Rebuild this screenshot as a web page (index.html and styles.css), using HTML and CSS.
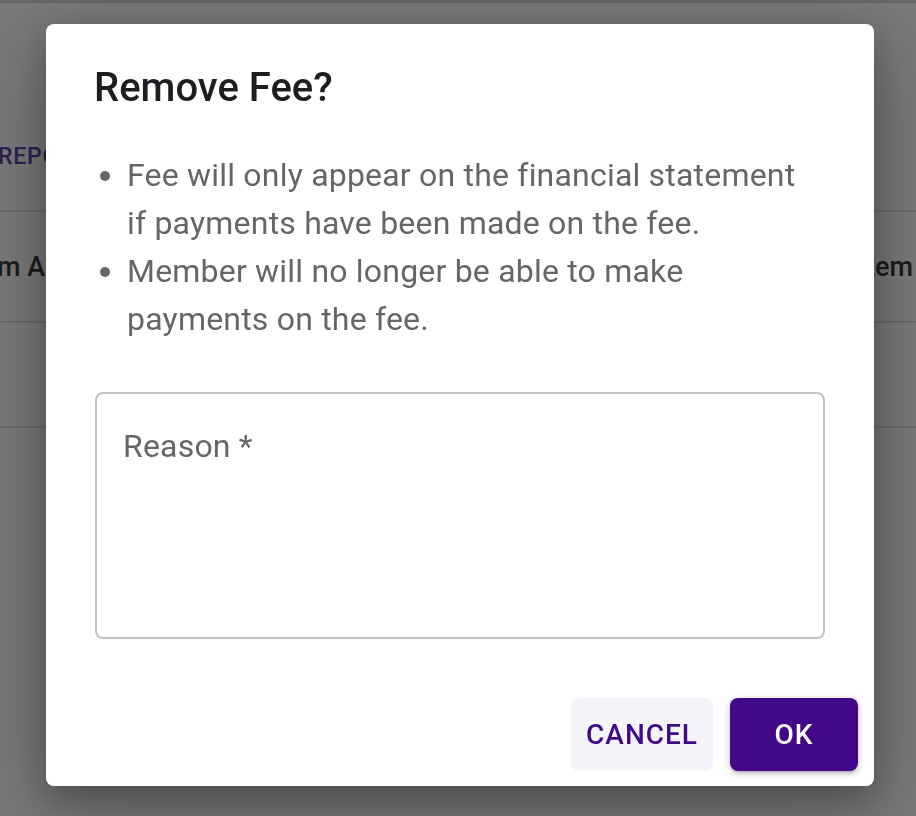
FILE: index.html
```html
<!DOCTYPE html>
<html lang="en">
<head>
<meta charset="utf-8">
<title>Remove Fee?</title>
<link rel="stylesheet" href="styles.css">
</head>
<body>
<div class="page">
  <div class="topbar"></div>
  <div class="tabs"><span class="tab">REPORTS</span></div>
  <div class="row head">
    <span class="cell left">Item Amount</span>
    <span class="cell right">Item</span>
  </div>
  <div class="row empty"></div>
</div>

<div class="overlay">
  <div class="dialog" role="dialog" aria-labelledby="dlg-title">
    <h2 class="dialog-title" id="dlg-title">Remove Fee?</h2>
    <div class="dialog-content">
      <ul class="notes">
        <li>Fee will only appear on the financial statement if payments have been made on the fee.</li>
        <li>Member will no longer be able to make payments on the fee.</li>
      </ul>
      <div class="field">
        <span class="field-label">Reason *</span>
      </div>
    </div>
    <div class="dialog-actions">
      <button class="btn btn-text" type="button">CANCEL</button>
      <button class="btn btn-primary" type="button">OK</button>
    </div>
  </div>
</div>
</body>
</html>
```

FILE: styles.css
```css
* { box-sizing: border-box; }

html, body {
  margin: 0;
  padding: 0;
  height: 100%;
}

body {
  background: #7a7a7a;
  font-family: Roboto, "Liberation Sans", Arial, sans-serif;
  overflow: hidden;
}

.page {
  display: flex;
  flex-direction: column;
  width: 100%;
}

.topbar {
  height: 3px;
  background: #676767;
}

.tabs {
  height: 209px;
  display: flex;
  padding-top: 134px;
  border-bottom: 2px solid #6b6b6b;
}

.tab {
  margin-left: -2px;
  font-size: 23px;
  font-weight: 500;
  letter-spacing: 0.8px;
  color: #2e2150;
  line-height: 40px;
  height: 40px;
}

.row {
  display: flex;
  justify-content: space-between;
  align-items: center;
  border-bottom: 2px solid #6b6b6b;
}

.row.head {
  height: 111px;
}

.row.empty {
  height: 105px;
}

.cell {
  font-size: 27px;
  font-weight: 500;
  color: #1c1c1c;
  white-space: nowrap;
}

.cell.left {
  margin-left: -34px;
}

.cell.right {
  margin-right: 3px;
}

/* dialog overlay */
.overlay {
  position: fixed;
  inset: 0;
  display: flex;
  align-items: flex-start;
  padding: 24px 0 0 46px;
}

.dialog {
  width: 828px;
  height: 762px;
  background: #fff;
  border-radius: 8px;
  display: flex;
  flex-direction: column;
  box-shadow: 0 22px 70px 6px rgba(0, 0, 0, 0.28), 0 10px 30px rgba(0, 0, 0, 0.18);
}

.dialog-title {
  margin: 0;
  padding: 32px 48px 0;
  font-size: 40px;
  line-height: 64px;
  font-weight: 500;
  letter-spacing: 0;
  color: #1f1d22;
}

.dialog-content {
  padding: 31px 48px 0 49px;
  display: flex;
  flex-direction: column;
}

.notes {
  margin: 0;
  padding: 0 0 0 32px;
  width: 715px;
  color: #666;
  font-size: 32px;
  line-height: 48px;
  letter-spacing: 0.2px;
}

.notes li::marker {
  color: #666;
}

.field {
  margin-top: 49px;
  width: 730px;
  height: 247px;
  border: 2px solid #c4c4c4;
  border-radius: 8px;
  padding: 29px 26px 0;
}

.field-label {
  display: block;
  font-size: 32px;
  line-height: 46px;
  color: #666;
  letter-spacing: 0.2px;
}

.dialog-actions {
  margin-top: auto;
  display: flex;
  justify-content: flex-end;
  gap: 17px;
  padding: 0 16px 15px;
}

.btn {
  height: 73px;
  border: none;
  border-radius: 8px;
  font-family: Roboto, "Liberation Sans", Arial, sans-serif;
  font-size: 28px;
  font-weight: 500;
  letter-spacing: 1px;
  cursor: pointer;
}

.btn-text {
  width: 142px;
  background: #f6f4fb;
  color: #3f0b8a;
}

.btn-primary {
  width: 128px;
  background: #43088a;
  color: #fff;
  box-shadow: 0 3px 3px -2px rgba(0, 0, 0, 0.2), 0 3px 6px 0 rgba(0, 0, 0, 0.14), 0 1px 10px 0 rgba(0, 0, 0, 0.12);
}
```
